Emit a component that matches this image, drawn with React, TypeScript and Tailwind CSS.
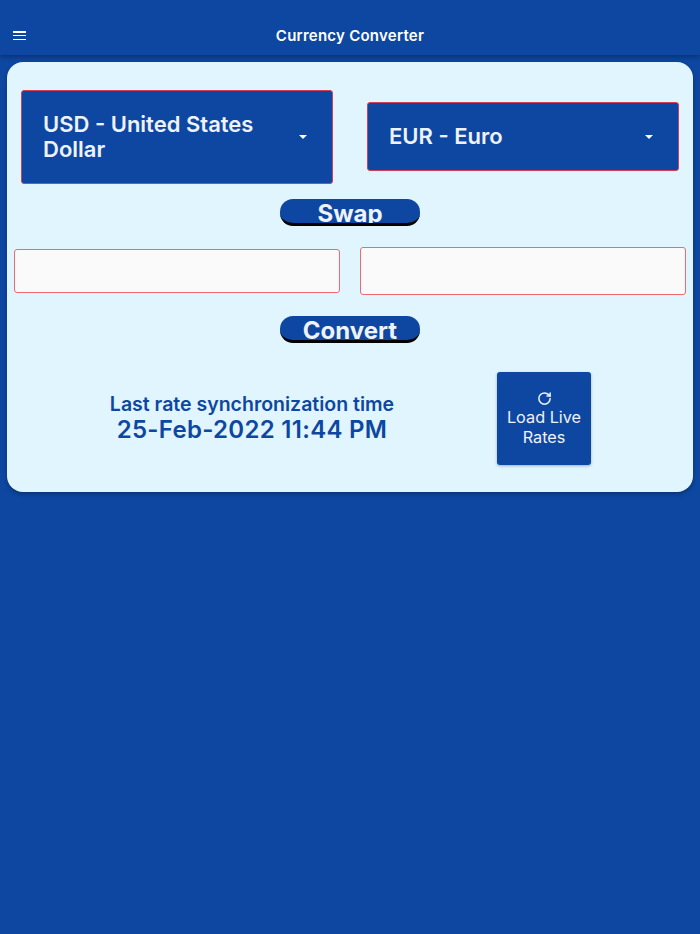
import React from 'react';
import { RotateCw } from 'lucide-react';

const BLUE = 'bg-[#0d47a1]';

const CurrencySelect = ({ label, className }: { label: string; className: string }) => (
  <div className="flex flex-1 items-start">
    <div className={`flex w-[312px] items-center rounded-[3px] border border-[#d0405a] ${BLUE} pl-[21px] pr-[25px] ${className}`}>
      <span className="flex-1 text-[22px] leading-[25px] font-semibold text-[#eef3fa]">{label}</span>
      <span className="h-0 w-0 border-x-[4px] border-t-[4px] border-x-transparent border-t-white" />
    </div>
  </div>
);

const PillButton = ({ label }: { label: string }) => (
  <div className="flex justify-center">
    <button className={`flex h-[27px] w-[140px] items-start justify-center overflow-hidden rounded-[13px] border-b-[3px] border-black ${BLUE} text-[24px] leading-[29px] font-bold text-[#eef3fa]`}>
      {label}
    </button>
  </div>
);

const AmountInput = ({ height }: { height: string }) => (
  <div className="flex flex-1 items-center">
    <input className={`w-full rounded-[3px] border border-[#ee6a70] bg-[#fafafa] ${height}`} />
  </div>
);

export default function App() {
  return (
    <div className={`flex h-[934px] w-[700px] flex-col ${BLUE} font-['Inter',sans-serif]`}>
      <header className={`relative flex h-[55px] shrink-0 items-end ${BLUE} pb-[15px] shadow-[0_2px_5px_rgba(0,0,0,0.3)]`}>
        <button className="ml-[13px] flex h-[9px] w-[13px] flex-col justify-between">
          <span className="h-[1.5px] w-full bg-white" />
          <span className="h-[1.5px] w-full bg-white" />
          <span className="h-[1.5px] w-full bg-white" />
        </button>
        <h1 className="absolute inset-x-0 bottom-[9px] text-center text-[15px] leading-[20px] font-semibold tracking-[0.25px] text-white">
          Currency Converter
        </h1>
      </header>

      <main className="mx-[7px] mt-[7px] flex h-[430px] flex-col rounded-[16px] bg-[#e1f5fe] shadow-[0_2px_4px_rgba(0,0,0,0.3)]">
        <div className="mt-[28px] flex h-[94px] gap-[34px] px-[14px]">
          <CurrencySelect label="USD - United States Dollar" className="h-[94px]" />
          <CurrencySelect label="EUR - Euro" className="mt-[12px] h-[69px]" />
        </div>

        <div className="mt-[15px]">
          <PillButton label="Swap" />
        </div>

        <div className="mt-[21px] flex h-[48px] gap-[20px] px-[7px]">
          <AmountInput height="h-[44px]" />
          <AmountInput height="h-[48px]" />
        </div>

        <div className="mt-[21px]">
          <PillButton label="Convert" />
        </div>

        <div className="mt-[29px] flex h-[93px] items-center">
          <div className="w-[490px] text-center text-[#0d47a1]">
            <p className="text-[19.5px] leading-[22px] font-semibold">Last rate synchronization time</p>
            <p className="text-[24px] leading-[29px] font-semibold tracking-[0.3px]">25-Feb-2022 11:44 PM</p>
          </div>
          <button className={`flex h-[93px] w-[94px] flex-col items-center justify-center rounded-[3px] ${BLUE} text-[16.25px] leading-[20px] text-[#eef3fa] shadow-[0_1px_3px_rgba(0,0,0,0.3)]`}>
            <RotateCw size={15} strokeWidth={2.4} className="mb-[1px]" />
            <span>Load Live</span>
            <span>Rates</span>
          </button>
        </div>
      </main>
    </div>
  );
}
